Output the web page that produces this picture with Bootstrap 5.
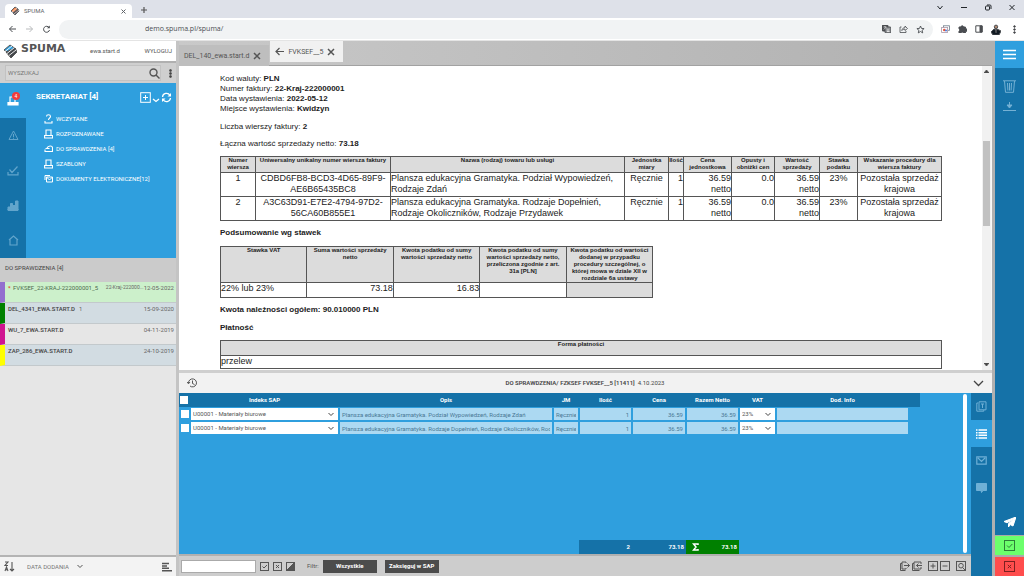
<!DOCTYPE html>
<html lang="pl">
<head>
<meta charset="utf-8">
<meta name="viewport" content="width=device-width, initial-scale=1">
<title>SPUMA</title>
<link href="https://cdn.jsdelivr.net/npm/bootstrap@5.3.0/dist/css/bootstrap.min.css" rel="stylesheet">
<style>
:root{--sky:#2f9fde;--deep:#1572a8;--line:#b0b0b0}
body{font-family:Roboto,"Noto Sans",sans-serif;font-size:6px;line-height:8px;color:#555;background:#fff}
button{background:none;border:0;padding:0;color:inherit;font:inherit;display:inline-flex;align-items:center;justify-content:center}
svg{display:block;flex:none;fill:none;stroke:currentColor}
a{color:inherit;text-decoration:none}
.min-h0{min-height:0}
.min-w0{min-width:0}
/* browser frame */
.tabstrip{height:18px;background:#dee1e9}
.browser-tab{width:127px;height:14px;background:#fff;border-radius:4px 4px 0 0;margin-left:5px;padding:0 6px 0 5px;color:#5f6368}
.toolbar{height:23px;background:#fff;color:#4a4d51;border-bottom:1px solid #e4e4e4}
.omnibox{height:19px;background:#f1f3f4;border-radius:10px}
.omnibox input{border:0;background:none;font-family:"Open Sans",sans-serif;font-size:7px;line-height:12px;color:#4b4e52;padding:0 0 0 86px;outline:0}
/* left column */
.side{width:176px;background:#e6e6e6}
.brandbar{height:20px;background:#fff}
.wordmark{font:bold 11px/12px "DejaVu Sans",sans-serif;color:#555}
.search-row{height:22px;background:#cfcfcf;border-top:2px solid var(--line)}
.search-box{height:16px;background:#d6d6d6;border:1px solid #c2c2c2;margin-left:5px}
.search-box input{border:0;background:none;outline:0;padding:0 2px;font-size:6px;color:#666;min-width:0}
.search-box input::placeholder{color:#777}
.nav-area{height:175px;background:var(--sky);color:#fff}
.icon-rail{width:26px;background:var(--deep);color:#62a5cc}
.icon-rail button{height:35px}
.icon-rail .current{background:var(--sky);color:#fff}
.count{position:absolute;top:9px;left:12px;width:8px;height:8px;border-radius:4px;background:#f23c3c;color:#fff;font-size:5px;line-height:8px}
.area-body{padding:8px 4px 0 10px}
.area-title{font-size:8px;line-height:12px;font-weight:700}
.area-links{padding:8px 0 0 8px}
.area-links a{height:15px;font-weight:400;gap:3px}
.list-title{height:24px;background:#cbcbcb;color:#444;padding:6px 5px 0}
.doc-item{height:21px;border-left:5px solid;border-bottom:1px solid #c3c9cc;padding:1px 2px 0 3px;line-height:9px;color:#666;white-space:nowrap}
.doc-item b{font-weight:500;color:#444}
.doc-item.chosen{background:#ccf0cb}
.doc-item.chosen b{font-weight:400;color:#4d6b4d}
.doc-item .ref-no{font-size:5px}
.doc-item .star{width:5px;color:#e8452c;font-weight:700}
.bg-even{background:#d2dce2}
.sortbar{height:21px;background:#f3f3f3;border-top:2px solid #b4b4b4}
.sortbar select{border:0;background:none;appearance:none;font:inherit;color:#777;padding:0}
/* documents */
.work{border-left:3px solid #c4c4c4;border-right:3px solid var(--line)}
.doc-tabs{height:25px;gap:1px;background:linear-gradient(90deg,#c9c9c9,#b0b0b0);border-bottom:1px solid #a2a2a2;font-size:7px}
.doc-tab{height:21px;padding:0 8px 0 5px;background:#bebebe}
.doc-tab.open{background:#f1f1f1}
.paper{background:#fff;color:#222;font-family:"Liberation Sans",Arial,sans-serif;font-size:8px;line-height:10px;padding:8px 40px 0 41px}
.paper p{margin:0}
.paper .gap-s{margin-top:7px}
.paper table{table-layout:fixed;border-collapse:collapse;width:100%;font-size:9px;line-height:11px;color:#222}
.paper th,.paper td{border:1px solid #555;padding:0 0 1px;vertical-align:top}
.paper th{background:#dcdcdc;font-size:6px;line-height:7px;text-align:center}
.paper .snug{width:60%}
.paper .snug th{padding:0}
.vscroll{width:11px;background:#f1f1f1;border-right:2px solid #f8f8f8}
.vscroll i{width:7px;height:85px;margin-top:68px;background:#c1c1c1}
.panel-head{height:23px;background:#f2f2f2;border-top:3px solid #cfcfcf;color:#444}
.grid-area{background:var(--sky);color:#fff;height:161px}
.grid-body{margin-right:43px}
.lines{table-layout:fixed;width:100%;border-collapse:collapse;font-size:6px;line-height:8px}
.lines th{background:var(--deep);height:14px;padding:0;font-weight:700;text-align:center;vertical-align:middle}
.lines td{padding:1px;height:14px}
.lines tbody input[type=text],.lines select{display:block;width:100%;height:12px;border:0;border-radius:0;background:#acd9f2;color:#4a7894;font-size:6px;line-height:8px;padding:0 2px}
.lines .num{text-align:right}
.lines select{appearance:none;background:#fff;color:#555}
.pick{position:relative;display:block}
.pick svg{position:absolute;right:4px;top:4px;color:#444}
.lines input[type=checkbox]{appearance:none;display:block;width:8px;height:8px;margin:0 0 0 1px;background:#fff}
.totals td{background:var(--deep);padding:0 2px;font-size:6px;font-weight:700}
.totals .blank{background:none}
.totals .sum{background:#008000}
.thumb{width:4px;border-radius:2px;background:#fff;margin:1px 4px 1px 0}
.side-tabs{width:21px;background:var(--deep);color:#6fb0d6}
.side-tabs button{height:27px}
.side-tabs .current{background:var(--sky);color:#fff}
.footbar{height:22px;background:#cdcdcd;border-top:2px solid #b0b0b0;padding:0 5px 0 2px}
.footbar input{width:75px;height:13px;border:1px solid #aaa;background:#fff}
.footbar .dark{width:54px;height:13px;background:#4c4c4c;color:#fff;font-weight:700}
.tool-pair{gap:2px;margin-left:6px}
/* right rail */
.rail{width:29px;background:var(--deep);color:#75b1d4}
.rail .menu{height:27px;background:var(--sky);color:#fff}
.rail .yes{height:20px;background:#6cff6c;color:#2d7d38;border-top:1px solid #aaa}
.rail .no{height:21px;background:#ff4d4d;color:#7d2020;border-top:2px solid #aaa}
</style>
</head>
<body class="vh-100 overflow-hidden d-flex flex-column">
<header>
  <div class="tabstrip d-flex align-items-end">
    <div class="browser-tab d-flex align-items-center">
      <svg width="10" height="10" viewBox="0 0 10 10" stroke="none"><path fill="#ef7f45" d="M1 5 5 1l3 2-4 4z"/><path fill="#5b4a4a" d="M3 7l5-4 1 2-4 4z"/><path stroke="#fff" stroke-width=".6" d="M2 6l5-4M4 8l5-4"/></svg>
      <span class="ms-1 flex-grow-1">SPUMA</span>
      <button aria-label="Zamknij kartę"><svg width="5" height="5" viewBox="0 0 5 5"><path d="M.5.5l4 4M4.500.5l-4 4"/></svg></button>
    </div>
    <button class="ms-1 mb-1 ps-1" aria-label="Nowa karta"><svg width="8" height="8" viewBox="0 0 8 8" stroke-width="1.200"><path d="M4 1v6M1 4h6"/></svg></button>
    <div class="ms-auto d-flex align-self-start text-dark gap-3 me-2 pt-1">
      <button aria-label="Szukaj kart"><svg width="8" height="7" viewBox="0 0 8 7"><path d="M1.500 2 4 5l2.500-3"/></svg></button>
      <button aria-label="Minimalizuj"><svg width="8" height="7" viewBox="0 0 8 7"><path d="M1 3.500h6"/></svg></button>
      <button aria-label="Przywróć"><svg width="8" height="7" viewBox="0 0 8 7"><rect x="1.500" y="2" width="4" height="4" rx="1"/><path d="M3 1h3q1 0 1 1v3"/></svg></button>
      <button aria-label="Zamknij"><svg width="8" height="7" viewBox="0 0 8 7"><path d="M1.500 1l5 5M6.500 1l-5 5"/></svg></button>
    </div>
  </div>
  <div class="toolbar d-flex align-items-center">
    <div class="d-flex gap-2 ps-2">
      <button aria-label="Wstecz"><svg width="9" height="8" viewBox="0 0 9 8"><path d="M8 4H1.500M4.500 1l-3 3 3 3"/></svg></button>
      <button aria-label="Dalej" style="color:#b9bbbd"><svg width="9" height="8" viewBox="0 0 9 8"><path d="M1 4h6.500M4.500 1l3 3-3 3"/></svg></button>
      <button aria-label="Odśwież"><svg width="9" height="8" viewBox="0 0 9 8"><path d="M7 2.500A3 3 0 1 0 7.500 5"/><path d="M7.800.5v2.700H5z" fill="currentColor" stroke="none"/></svg></button>
    </div>
    <div class="omnibox d-flex align-items-center flex-grow-1 ms-2 pe-1">
      <input class="flex-grow-1" type="text" aria-label="Adres" value="demo.spuma.pl/spuma/">
      <button class="me-2" aria-label="Przetłumacz"><svg width="9" height="8" viewBox="0 0 9 8" stroke="none"><rect width="6" height="6" rx="1" fill="#4a4d51"/><rect x="3" y="2" width="6" height="6" rx="1" fill="#94979a"/><path d="M1.500 2h3M3 1v1M1.800 4.500 4 2.200" stroke="#fff" stroke-width=".6"/><path d="M5 6.500h2.500M6 4v3" stroke="#fff" stroke-width=".6"/></svg></button>
      <button class="me-2" aria-label="Udostępnij"><svg width="9" height="8" viewBox="0 0 9 8" stroke-width=".8"><path d="M2.500 2H1v5.500h6V6M2.800 5.500c.3-2 1.500-2.800 3.200-2.800V1l2.500 2.500L6 5.500V4.200c-1.500 0-2.400.3-3.200 1.300z"/></svg></button>
      <button class="me-1" aria-label="Dodaj zakładkę"><svg width="9" height="9" viewBox="0 0 9 9" stroke-width=".9"><path d="M4.500 1l1 2.400 2.600.2-2 1.700.6 2.600-2.200-1.400-2.200 1.400.6-2.600-2-1.700 2.600-.2z"/></svg></button>
    </div>
    <div class="d-flex align-items-center ms-2 me-1 pe-1 gap-2">
      <button aria-label="Rozszerzenie"><svg width="9" height="8" viewBox="0 0 9 8" stroke-width=".8"><rect x="2.500" y=".8" width="6" height="4.500" stroke="#6d7d8a"/><rect x=".6" y="2.500" width="6" height="5" fill="#fff" stroke="#a9a"/><circle cx="3.300" cy="5" r="1.300" fill="#e5533c" stroke="none"/><circle cx="5" cy="5.500" r="1" fill="#4a7de0" stroke="none"/></svg></button>
      <button aria-label="Rozszerzenia"><svg width="9" height="8" viewBox="0 0 9 8" stroke="none"><path d="M1 2h2a1.200 1.200 0 1 1 2.400 0h2v2a1.200 1.200 0 1 1 0 2.200v1.800H5.300a1.100 1.100 0 0 0-2.200 0H1V6a1.100 1.100 0 0 0 0-2.100z" fill="currentColor"/></svg></button>
      <button aria-label="Panel boczny"><svg width="8" height="8" viewBox="0 0 8 8"><path d="M.8.8h6.400v6.400H.8z"/><path d="M5 1h2v6H5z" fill="currentColor"/></svg></button>
      <button aria-label="Profil"><svg width="10" height="11" viewBox="0 0 10 11" stroke="none"><path fill="#111a22" d="M0 8l3-3h3l4 2-2 4H2z"/><circle cx="5" cy="2.800" r="1.700" fill="#b58c74"/><path fill="#fff" d="M4 5h1.500l-.4 4z"/></svg></button>
      <button class="ps-1" aria-label="Menu"><svg width="3" height="9" viewBox="0 0 3 9" stroke="none"><g fill="#444"><circle cx="1.500" cy="1.500" r=".8"/><circle cx="1.500" cy="4.500" r=".8"/><circle cx="1.500" cy="7.500" r=".8"/></g></svg></button>
    </div>
  </div>
</header>

<div class="d-flex flex-grow-1 min-h0">
  <aside class="side d-flex flex-column flex-shrink-0">
    <div class="brandbar d-flex align-items-center px-1">
      <svg width="13" height="14" viewBox="0 0 13 14" stroke="none"><path fill="#2f9fde" d="M0 6l6-5 6 4-6 5z"/><path fill="#44484c" d="M2 8l9-4 2 4-6 6z"/><path stroke="#fff" stroke-width=".9" d="M1 7.500 8 2M3 9.500l7.500-6M5 11.500l7-5.500"/></svg>
      <span class="wordmark ms-1 pb-1">SPUMA</span>
      <span class="mx-auto">ewa.start.d</span>
      <a href="#">WYLOGUJ</a>
    </div>
    <div class="search-row d-flex align-items-center">
      <div class="search-box d-flex align-items-center flex-grow-1">
        <input class="flex-grow-1" type="text" aria-label="Wyszukaj" placeholder="WYSZUKAJ">
        <button aria-label="Szukaj"><svg width="11" height="11" viewBox="0 0 11 11" stroke-width="1.400"><circle cx="4.500" cy="4.500" r="3.500"/><path d="M7 7l3.500 3.500"/></svg></button>
      </div>
      <button class="mx-1 ps-1" aria-label="Więcej"><svg width="3" height="9" viewBox="0 0 3 9" stroke="none"><g fill="#444"><circle cx="1.500" cy="1.500" r="1"/><circle cx="1.500" cy="4.500" r="1"/><circle cx="1.500" cy="7.500" r="1"/></g></svg></button>
    </div>
    <div class="nav-area d-flex">
      <div class="icon-rail d-flex flex-column flex-shrink-0">
        <button class="current position-relative" aria-label="Sekretariat"><svg width="12" height="10" viewBox="0 0 12 10" stroke-width="1.200"><path d="M3 6V1h5v5"/><path fill="currentColor" d="M1 6.500h10v2.500H1z"/></svg><span class="count">4</span></button>
        <button aria-label="Ostrzeżenia"><svg width="11" height="11" viewBox="0 0 11 11"><path d="M5.500 1 10 9.500H1zM5.500 4v3M5.500 7.700v1"/></svg></button>
        <button aria-label="Zatwierdzanie"><svg width="12" height="11" viewBox="0 0 12 11" stroke-width="1.200"><path d="M1 7v2.800h10V7M2.500 4.500 5 7.500 10.500 1.500"/></svg></button>
        <button aria-label="Raporty"><svg width="12" height="11" viewBox="0 0 12 11" stroke="none"><path fill="currentColor" d="M1 7h2v3H1zM3.500 3.500h2V10h-2zM6 5.500h2V10H6zM8.500 1h2.500v9H8.500zM1 9h10v1.500H1z"/></svg></button>
        <button aria-label="Start"><svg width="11" height="11" viewBox="0 0 11 11" stroke-width="1.200"><path d="M1 5 5.500 1 10 5M2 4.500V10h7V4.500"/></svg></button>
      </div>
      <div class="area-body flex-grow-1">
        <div class="d-flex align-items-center">
          <span class="area-title flex-grow-1">SEKRETARIAT [4]</span>
          <button aria-label="Dodaj"><svg width="11" height="11" viewBox="0 0 11 11"><rect x=".7" y=".7" width="9.600" height="9.600"/><path d="M5.500 3v5M3 5.500h5"/></svg></button>
          <button aria-label="Rozwiń"><svg width="9" height="11" viewBox="0 0 9 11" stroke-width="1.300"><path d="M2 7l3 2.500L8 7"/></svg></button>
          <button aria-label="Odśwież listę"><svg width="12" height="11" viewBox="0 0 12 11" stroke-width="1.300"><path d="M2.500 5A4 4 0 0 1 10 3.500M10.500 6A4 4 0 0 1 3 7.500"/><path fill="currentColor" stroke="none" d="M11 1v3.500H7.500zM2 10V6.500h3.500z"/></svg></button>
        </div>
        <nav class="area-links d-flex flex-column">
          <a href="#" class="d-flex align-items-center"><svg width="9" height="10" viewBox="0 0 9 10" stroke-width="1.100"><path d="M2.500 2.500c0-2.300 4-2.300 4 0C6.500 4 4.500 4 4.500 6M1 7v2h7V7"/></svg>WCZYTANE</a>
          <a href="#" class="d-flex align-items-center"><svg width="9" height="10" viewBox="0 0 9 10" stroke-width="1.100"><path d="M2 6V1h5v5M.6 6.500h8V9h-8z"/></svg>ROZPOZNAWANE</a>
          <a href="#" class="d-flex align-items-center"><svg width="9" height="10" viewBox="0 0 9 10" stroke-width="1.100"><path d="M1 5.500v2h7.500V4c0-3-4.500-2.500-5.500 0M1.500 4.500h4"/></svg>DO SPRAWDZENIA [4]</a>
          <a href="#" class="d-flex align-items-center"><svg width="9" height="10" viewBox="0 0 9 10" stroke-width="1.100"><path d="M2 6V1h5v5M.6 6.500h8V9h-8z"/></svg>SZABLONY</a>
          <a href="#" class="d-flex align-items-center"><svg width="9" height="10" viewBox="0 0 9 10"><path d="M1 6V1.500h5M2.500 3h6v5h-6zM2.500 3l3 3 3-3"/></svg>DOKUMENTY ELEKTRONICZNE[12]</a>
        </nav>
      </div>
    </div>
    <div class="list-title">DO SPRAWDZENIA [4]</div>
    <div class="doc-item chosen d-flex" style="border-left-color:#9370cf"><span class="star">*</span><b>FVKSEF_22-KRAJ-222000001_5</b><span class="ref-no ms-auto">22-Kraj-222000...</span><span>12-05-2022</span></div>
    <div class="doc-item d-flex bg-even" style="border-left-color:#008000"><b>DEL_4341_EWA.START.D</b><span class="ms-1 flex-grow-1">1</span><span>15-09-2020</span></div>
    <div class="doc-item d-flex" style="border-left-color:#d01590"><b class="flex-grow-1">WU_7_EWA.START.D</b><span>04-11-2019</span></div>
    <div class="doc-item d-flex bg-even" style="border-left-color:#ffff00"><b class="flex-grow-1">ZAP_286_EWA.START.D</b><span>24-10-2019</span></div>
    <div class="sortbar d-flex align-items-center mt-auto px-1">
      <button aria-label="Kierunek sortowania"><svg width="11" height="11" viewBox="0 0 11 11" stroke-width="1.100"><path d="M1 1h3L1 4.500h3M1 10l1.500-4L4 10M1.500 8.800h2M8 1v9M6 8l2 2 2-2"/></svg></button>
      <select class="ms-2 ps-1" aria-label="Sortowanie"><option>DATA DODANIA</option></select>
      <svg class="ms-2" width="6" height="5" viewBox="0 0 6 5"><path d="M.5 1 3 3.500 5.500 1"/></svg>
      <button class="ms-auto" aria-label="Układ listy"><svg width="11" height="10" viewBox="0 0 11 10" stroke-width="1.600"><path d="M1 1.500h7M1 4h5M1 6.300h7M1 8.800h10"/></svg></button>
    </div>
  </aside>

  <main class="work d-flex flex-column flex-grow-1 min-h0 min-w0">
    <div class="doc-tabs d-flex">
      <div class="doc-tab d-flex align-items-center mt-1">DEL_140_ewa.start.d<button class="ms-1" aria-label="Zamknij DEL_140"><svg width="8" height="8" viewBox="0 0 8 8" stroke-width="1.500"><path d="M1 1l6 6M7 1 1 7"/></svg></button></div>
      <div class="doc-tab open d-flex align-items-center"><button class="me-1" aria-label="Wróć"><svg width="9" height="9" viewBox="0 0 9 9" stroke-width="1.200"><path d="M9 4.500H1M4.500 1 1 4.500 4.500 8"/></svg></button>FVKSEF__5<button class="ms-1" aria-label="Zamknij FVKSEF"><svg width="8" height="8" viewBox="0 0 8 8" stroke-width="1.500"><path d="M1 1l6 6M7 1 1 7"/></svg></button></div>
    </div>
    <div class="d-flex flex-grow-1 overflow-hidden min-h0">
      <article class="paper flex-grow-1">
        <p>Kod waluty: <b>PLN</b></p>
        <p>Numer faktury: <b>22-Kraj-222000001</b></p>
        <p>Data wystawienia: <b>2022-05-12</b></p>
        <p>Miejsce wystawienia: <b>Kwidzyn</b></p>
        <p class="mt-2">Liczba wierszy faktury: <b>2</b></p>
        <p class="gap-s">Łączna wartość sprzedaży netto: <b>73.18</b></p>
        <table class="gap-s">
          <colgroup><col style="width:35px"><col style="width:135px"><col style="width:234px"><col style="width:44px"><col style="width:15px"><col style="width:48px"><col style="width:43px"><col style="width:45px"><col style="width:38px"><col style="width:84px"></colgroup>
          <thead><tr><th>Numer wiersza</th><th>Uniwersalny unikalny numer wiersza faktury</th><th>Nazwa (rodzaj) towaru lub usługi</th><th>Jednostka miary</th><th>Ilość</th><th>Cena jednostkowa</th><th>Opusty i obniżki cen</th><th>Wartość sprzedaży</th><th>Stawka podatku</th><th>Wskazanie procedury dla wiersza faktury</th></tr></thead>
          <tbody>
          <tr class="text-center"><td>1</td><td>CDBD6FB8-BCD3-4D65-89F9-AE6B65435BC8</td><td class="text-start">Plansza edukacyjna Gramatyka. Podział Wypowiedzeń, Rodzaje Zdań</td><td>Ręcznie</td><td class="text-end">1</td><td class="text-end">36.59<br>netto</td><td class="text-end">0.0</td><td class="text-end">36.59<br>netto</td><td>23%</td><td>Pozostała sprzedaż krajowa</td></tr>
          <tr class="text-center"><td>2</td><td>A3C63D91-E7E2-4794-97D2-56CA60B855E1</td><td class="text-start">Plansza edukacyjna Gramatyka. Rodzaje Dopełnień, Rodzaje Okoliczników, Rodzaje Przydawek</td><td>Ręcznie</td><td class="text-end">1</td><td class="text-end">36.59<br>netto</td><td class="text-end">0.0</td><td class="text-end">36.59<br>netto</td><td>23%</td><td>Pozostała sprzedaż krajowa</td></tr>
          </tbody>
        </table>
        <p class="gap-s"><b>Podsumowanie wg stawek</b></p>
        <div class="snug mt-2">
        <table>
          <thead><tr><th>Stawka VAT</th><th>Suma wartości sprzedaży netto</th><th>Kwota podatku od sumy wartości sprzedaży netto</th><th>Kwota podatku od sumy wartości sprzedaży netto, przeliczona zgodnie z art. 31a&nbsp;[PLN]</th><th>Kwota podatku od wartości dodanej w przypadku procedury szczególnej, o której mowa w dziale XII w rozdziale 6a ustawy</th></tr></thead>
          <tbody><tr style="height:15px"><td>22% lub 23%</td><td class="text-end">73.18</td><td class="text-end">16.83</td><td></td><td style="background:#dcdcdc"></td></tr></tbody>
        </table>
        </div>
        <p class="gap-s"><b>Kwota należności ogółem: 90.010000 PLN</b></p>
        <p class="mt-2"><b>Płatność</b></p>
        <table class="gap-s">
          <thead><tr style="height:15px"><th>Forma płatności</th></tr></thead>
          <tbody><tr><td>przelew</td></tr></tbody>
        </table>
      </article>
      <div class="vscroll d-flex flex-column align-items-center flex-shrink-0">
        <svg class="mt-1" width="5" height="3" viewBox="0 0 5 3" stroke="none"><path fill="#444" d="M2.500 0 5 3H0z"/></svg>
        <i></i>
        <svg class="mt-auto mb-1" width="5" height="3" viewBox="0 0 5 3" stroke="none"><path fill="#444" d="M0 0h5L2.500 3z"/></svg>
      </div>
    </div>
    <section>
      <div class="panel-head d-flex align-items-center px-2">
        <button aria-label="Historia"><svg width="10" height="10" viewBox="0 0 10 10" stroke-width=".9"><path d="M1.500 5A4 4 0 1 1 3 8M0 4l1.500 1.800L3 4M5.500 2.500v3l2 1"/></svg></button>
        <span class="mx-auto"><b class="fw-semibold">DO SPRAWDZENIA/ FZKSEF FVKSEF__5 [11411]</b>&nbsp; 4.10.2023</span>
        <button aria-label="Zwiń panel"><svg width="11" height="7" viewBox="0 0 11 7" stroke-width="1.300"><path d="M1 1l4.500 4.500L10 1"/></svg></button>
      </div>
      <div class="d-flex">
        <div class="flex-grow-1 d-flex flex-column min-w0">
          <div class="grid-area d-flex">
            <div class="grid-body flex-grow-1 d-flex flex-column justify-content-between min-w0">
              <table class="lines">
                <colgroup><col style="width:11px"><col style="width:149px"><col style="width:214px"><col style="width:26px"><col style="width:53px"><col style="width:54px"><col style="width:53px"><col style="width:37px"><col style="width:133px"><col style="width:11px"></colgroup>
                <thead><tr><th><input type="checkbox" aria-label="Zaznacz wszystkie"></th><th>Indeks SAP</th><th>Opis</th><th>JM</th><th>Ilość</th><th>Cena</th><th>Razem Netto</th><th>VAT</th><th>Dod. Info</th><th></th></tr></thead>
                <tbody>
                <tr><td><input type="checkbox" aria-label="Wiersz 1"></td><td><span class="pick"><select aria-label="Indeks SAP 1"><option>U00001 - Materiały biurowe</option></select><svg width="6" height="5" viewBox="0 0 6 5"><path d="M.5 1 3 3.500 5.500 1"/></svg></span></td><td><input type="text" aria-label="Opis 1" value="Plansza edukacyjna Gramatyka. Podział Wypowiedzeń, Rodzaje Zdań"></td><td><input type="text" aria-label="JM 1" value="Ręcznie"></td><td><input class="num" type="text" aria-label="Ilość 1" value="1"></td><td><input class="num" type="text" aria-label="Cena 1" value="36.59"></td><td><input class="num" type="text" aria-label="Razem Netto 1" value="36.59"></td><td><span class="pick"><select aria-label="VAT 1"><option>23%</option></select><svg width="6" height="5" viewBox="0 0 6 5"><path d="M.5 1 3 3.500 5.500 1"/></svg></span></td><td><input type="text" aria-label="Dod. Info 1"></td><td></td></tr>
                <tr><td><input type="checkbox" aria-label="Wiersz 2"></td><td><span class="pick"><select aria-label="Indeks SAP 2"><option>U00001 - Materiały biurowe</option></select><svg width="6" height="5" viewBox="0 0 6 5"><path d="M.5 1 3 3.500 5.500 1"/></svg></span></td><td><input type="text" aria-label="Opis 2" value="Plansza edukacyjna Gramatyka. Rodzaje Dopełnień, Rodzaje Okoliczników, Rodz"></td><td><input type="text" aria-label="JM 2" value="Ręcznie"></td><td><input class="num" type="text" aria-label="Ilość 2" value="1"></td><td><input class="num" type="text" aria-label="Cena 2" value="36.59"></td><td><input class="num" type="text" aria-label="Razem Netto 2" value="36.59"></td><td><span class="pick"><select aria-label="VAT 2"><option>23%</option></select><svg width="6" height="5" viewBox="0 0 6 5"><path d="M.5 1 3 3.500 5.500 1"/></svg></span></td><td><input type="text" aria-label="Dod. Info 2"></td><td></td></tr>
                </tbody>
              </table>
              <table class="lines totals">
                <colgroup><col style="width:400px"><col style="width:53px"><col style="width:54px"><col style="width:53px"><col style="width:181px"></colgroup>
                <tbody><tr><td class="blank"></td><td class="num">2</td><td class="num">73.18</td><td class="sum"><div class="d-flex align-items-center justify-content-between"><svg class="ms-1" width="7" height="8" viewBox="0 0 7 8" stroke-width="1.500"><path d="M6 2V1H1.500L4 4 1.500 7H6V6"/></svg>73.18</div></td><td class="blank"></td></tr></tbody>
              </table>
            </div>
            <div class="thumb flex-shrink-0"></div>
          </div>
          <div class="footbar d-flex align-items-center">
            <input type="text" aria-label="Filtr tekstowy">
            <div class="d-flex gap-1 ms-1">
              <button aria-label="Zaznacz"><svg width="9" height="9" viewBox="0 0 9 9"><rect x=".5" y=".5" width="8" height="8"/><path d="M2.500 4.500 4 6l3-3"/></svg></button>
              <button aria-label="Odznacz"><svg width="9" height="9" viewBox="0 0 9 9"><rect x=".5" y=".5" width="8" height="8"/><path d="M3 3l3 3M6 3 3 6"/></svg></button>
              <button aria-label="Odwróć"><svg width="9" height="9" viewBox="0 0 9 9"><rect x=".5" y=".5" width="8" height="8"/><path d="M8 1v7H1z" fill="currentColor"/></svg></button>
            </div>
            <span class="ms-2 ps-1">Filtr:</span>
            <button class="dark ms-1">Wszystkie</button>
            <button class="dark ms-2">Zaksięguj w SAP</button>
            <div class="tool-pair d-flex ms-auto">
              <button aria-label="Eksport"><svg width="10" height="10" viewBox="0 0 10 10"><path d="M6 2V1H2v7h4V7M2 2.500H.5v7h5M4 4.500h5.500M7.500 2.500l2 2-2 2"/></svg></button>
              <button aria-label="Import"><svg width="10" height="10" viewBox="0 0 10 10"><path d="M9 3V1H2v7h7V6M2 2.500H.5v7h7M10 4.500H4.500M6.500 2.500l-2 2 2 2"/></svg></button>
            </div>
            <div class="tool-pair d-flex">
              <button aria-label="Dodaj wiersz"><svg width="10" height="10" viewBox="0 0 10 10"><rect x=".5" y=".5" width="9" height="9"/><path d="M5 2.500v5M2.500 5h5"/></svg></button>
              <button aria-label="Usuń wiersz"><svg width="10" height="10" viewBox="0 0 10 10"><rect x=".5" y=".5" width="9" height="9"/><path d="M2.500 5h5"/></svg></button>
            </div>
            <div class="tool-pair d-flex">
              <button aria-label="Podgląd"><svg width="10" height="10" viewBox="0 0 10 10"><rect x=".5" y=".5" width="9" height="9"/><circle cx="5" cy="4.700" r="2.300"/><path d="M6.500 6.500 9 9"/></svg></button>
            </div>
          </div>
        </div>
        <div class="side-tabs d-flex flex-column flex-shrink-0">
          <button aria-label="Dokument"><svg width="11" height="11" viewBox="0 0 11 11"><path d="M3 .8h7v8H3zM2 2H.8v8.200h7V9M5 3h3M6.500 3v4"/></svg></button>
          <button class="current" aria-label="Pozycje"><svg width="11" height="10" viewBox="0 0 11 10" stroke-width="1.400"><path d="M0 1h1.500M2.500 1H11M0 3.700h1.500M2.500 3.700H11M0 6.300h1.500M2.500 6.300H11M0 9h1.500M2.500 9H11"/></svg></button>
          <button aria-label="Wiadomości"><svg width="11" height="9" viewBox="0 0 11 9" stroke-width="1.200"><path d="M.8.8h9.400v7.400H.8zM2 2l3.500 3.500L9 2"/></svg></button>
          <button aria-label="Komentarze"><svg width="11" height="10" viewBox="0 0 11 10" stroke="none"><path fill="currentColor" d="M.5.5h10v7H7L5.500 9.500 5 7.500H.5z"/></svg></button>
        </div>
      </div>
    </section>
  </main>

  <aside class="rail d-flex flex-column flex-shrink-0">
    <button class="menu" aria-label="Menu aplikacji"><svg width="13" height="11" viewBox="0 0 13 11" stroke-width="1.600"><path d="M0 1.500h13M0 5.500h13M0 9.500h13"/></svg></button>
    <button class="mt-2 pt-1" aria-label="Usuń"><svg width="13" height="13" viewBox="0 0 13 13"><path d="M0 .8h13M1.500 1l1 11.300h8l1-11.300M4.500 3l.4 7.500M6.500 3v7.500M8.500 3l-.4 7.500"/></svg></button>
    <button class="mt-2" aria-label="Pobierz"><svg width="13" height="11" viewBox="0 0 13 11"><path d="M0 9.500h13M6.500 1v4"/><path d="M4 4h5L6.500 7z" fill="currentColor"/></svg></button>
    <button class="mt-auto mb-2 text-white" aria-label="Wyślij"><svg width="12" height="10" viewBox="0 0 12 10" stroke="none"><path fill="currentColor" d="M12 0 0 4.500l3 1.300L10 2 4.500 6.500V10l1.700-2.400L9 9z"/></svg></button>
    <button class="yes" aria-label="Akceptuj"><svg width="11" height="11" viewBox="0 0 11 11"><rect x=".5" y=".5" width="10" height="10"/><path d="M3 5.500 5 7.500 8.300 4"/></svg></button>
    <button class="no" aria-label="Odrzuć"><svg width="11" height="11" viewBox="0 0 11 11"><rect x=".5" y=".5" width="10" height="10"/><path d="M3.800 3.800l3.400 3.400M7.200 3.800 3.800 7.200"/></svg></button>
  </aside>
</div>
<script src="https://cdn.jsdelivr.net/npm/bootstrap@5.3.0/dist/js/bootstrap.bundle.min.js"></script>
</body>
</html>
